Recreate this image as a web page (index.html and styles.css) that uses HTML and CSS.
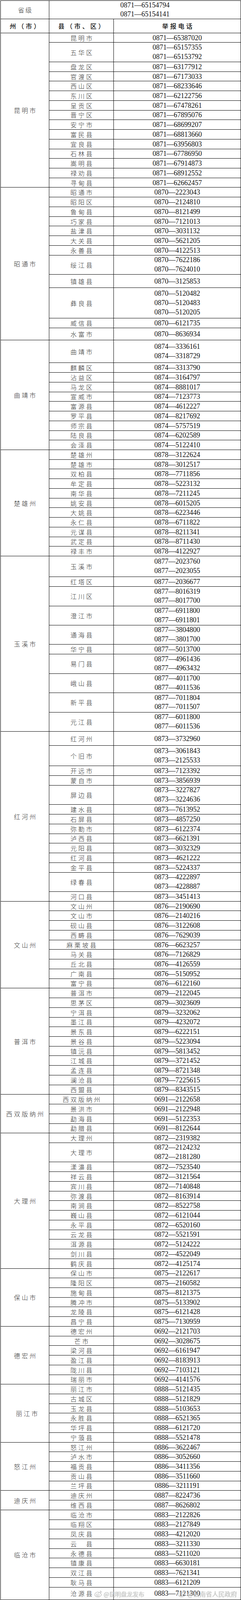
FILE: index.html
```html
<!DOCTYPE html>
<html lang="zh-CN">
<head>
<meta charset="utf-8">
<title>举报电话</title>
<link rel="stylesheet" href="styles.css">
</head>
<body>
<div class="page">
<div class="tbl">
<div class="row"><div class="g lv">省级</div><div class="p wide top"><div class="ln">0871—65154794</div><div class="ln">0871—65154141</div></div></div>
<div class="row head"><div class="g">州（市）</div><div class="n">县（市、区）</div><div class="p">举报电话</div></div>

<div class="row"><div class="g s15">昆明市</div><div class="n">昆明市</div><div class="p">0871—65387020</div></div>
<div class="row"><div class="n">五华区</div><div class="p"><div class="ln">0871—65157355</div><div class="ln">0871—65153792</div></div></div>
<div class="row"><div class="n">盘龙区</div><div class="p">0871—63177912</div></div>
<div class="row"><div class="n">官渡区</div><div class="p">0871—67173033</div></div>
<div class="row"><div class="n">西山区</div><div class="p">0871—68233646</div></div>
<div class="row"><div class="n">东川区</div><div class="p">0871—62122756</div></div>
<div class="row"><div class="n">呈贡区</div><div class="p">0871—67478261</div></div>
<div class="row"><div class="n">晋宁区</div><div class="p">0871—67895076</div></div>
<div class="row"><div class="n">安宁市</div><div class="p">0871—68699207</div></div>
<div class="row"><div class="n">富民县</div><div class="p">0871—68813660</div></div>
<div class="row"><div class="n">宜良县</div><div class="p">0871—63956803</div></div>
<div class="row"><div class="n">石林县</div><div class="p">0871—67786950</div></div>
<div class="row"><div class="n">嵩明县</div><div class="p">0871—67914873</div></div>
<div class="row"><div class="n">禄劝县</div><div class="p">0871—68912552</div></div>
<div class="row"><div class="n">寻甸县</div><div class="p">0871—62662457</div></div>

<div class="row"><div class="g s12">昭通市</div><div class="n">昭通市</div><div class="p">0870—2223043</div></div>
<div class="row"><div class="n">昭阳区</div><div class="p">0870—2124810</div></div>
<div class="row"><div class="n">鲁甸县</div><div class="p">0870—8121499</div></div>
<div class="row"><div class="n">巧家县</div><div class="p">0870—7121013</div></div>
<div class="row"><div class="n">盐津县</div><div class="p">0870—3031132</div></div>
<div class="row"><div class="n">大关县</div><div class="p">0870—5621205</div></div>
<div class="row"><div class="n">永善县</div><div class="p">0870—4122513</div></div>
<div class="row"><div class="n">绥江县</div><div class="p"><div class="ln">0870—7622186</div><div class="ln">0870—7624010</div></div></div>
<div class="row"><div class="n">镇雄县</div><div class="p">0870—3125853</div></div>
<div class="row"><div class="n">彝良县</div><div class="p"><div class="ln">0870—5120482</div><div class="ln">0870—5120483</div><div class="ln">0870—5120205</div></div></div>
<div class="row"><div class="n">威信县</div><div class="p">0870—6121735</div></div>
<div class="row"><div class="n">水富市</div><div class="p">0870—8636934</div></div>

<div class="row"><div class="g s10">曲靖市</div><div class="n">曲靖市</div><div class="p"><div class="ln">0874—3336161</div><div class="ln">0874—3318729</div></div></div>
<div class="row"><div class="n">麒麟区</div><div class="p">0874—3313790</div></div>
<div class="row"><div class="n">沾益区</div><div class="p">0874—3164797</div></div>
<div class="row"><div class="n">马龙区</div><div class="p">0874—8881017</div></div>
<div class="row"><div class="n">宣威市</div><div class="p">0874—7123773</div></div>
<div class="row"><div class="n">富源县</div><div class="p">0874—4612227</div></div>
<div class="row"><div class="n">罗平县</div><div class="p">0874—8217692</div></div>
<div class="row"><div class="n">师宗县</div><div class="p">0874—5757519</div></div>
<div class="row"><div class="n">陆良县</div><div class="p">0874—6202589</div></div>
<div class="row"><div class="n">会泽县</div><div class="p">0874—5122410</div></div>

<div class="row"><div class="g s11">楚雄州</div><div class="n">楚雄州</div><div class="p">0878—3122624</div></div>
<div class="row"><div class="n">楚雄市</div><div class="p">0878—3012517</div></div>
<div class="row"><div class="n">双柏县</div><div class="p">0878—7711856</div></div>
<div class="row"><div class="n">牟定县</div><div class="p">0878—5223132</div></div>
<div class="row"><div class="n">南华县</div><div class="p">0878—7211245</div></div>
<div class="row"><div class="n">姚安县</div><div class="p">0878—6015205</div></div>
<div class="row"><div class="n">大姚县</div><div class="p">0878—6223446</div></div>
<div class="row"><div class="n">永仁县</div><div class="p">0878—6711822</div></div>
<div class="row"><div class="n">元谋县</div><div class="p">0878—8211341</div></div>
<div class="row"><div class="n">武定县</div><div class="p">0878—8711430</div></div>
<div class="row"><div class="n">禄丰市</div><div class="p">0878—4122927</div></div>

<div class="row"><div class="g s10">玉溪市</div><div class="n">玉溪市</div><div class="p"><div class="ln">0877—2023760</div><div class="ln">0877—2023055</div></div></div>
<div class="row"><div class="n">红塔区</div><div class="p">0877—2036677</div></div>
<div class="row"><div class="n">江川区</div><div class="p"><div class="ln">0877—8016319</div><div class="ln">0877—8017700</div></div></div>
<div class="row"><div class="n">澄江市</div><div class="p"><div class="ln">0877—6911800</div><div class="ln">0877—6911801</div></div></div>
<div class="row"><div class="n">通海县</div><div class="p"><div class="ln">0877—3804800</div><div class="ln">0877—3801700</div></div></div>
<div class="row"><div class="n">华宁县</div><div class="p">0877—5013700</div></div>
<div class="row"><div class="n">易门县</div><div class="p"><div class="ln">0877—4961436</div><div class="ln">0877—4963432</div></div></div>
<div class="row"><div class="n">峨山县</div><div class="p"><div class="ln">0877—4011700</div><div class="ln">0877—4011536</div></div></div>
<div class="row"><div class="n">新平县</div><div class="p"><div class="ln">0877—7011804</div><div class="ln">0877—7011507</div></div></div>
<div class="row"><div class="n">元江县</div><div class="p"><div class="ln">0877—6011800</div><div class="ln">0877—6011536</div></div></div>

<div class="row"><div class="g s14">红河州</div><div class="n">红河州</div><div class="p">0873—3732960</div></div>
<div class="row"><div class="n">个旧市</div><div class="p"><div class="ln">0873—3061843</div><div class="ln">0873—2125533</div></div></div>
<div class="row"><div class="n">开远市</div><div class="p">0873—7123392</div></div>
<div class="row"><div class="n">蒙自市</div><div class="p">0873—3856939</div></div>
<div class="row"><div class="n">屏边县</div><div class="p"><div class="ln">0873—3227827</div><div class="ln">0873—3224636</div></div></div>
<div class="row"><div class="n">建水县</div><div class="p">0873—7613952</div></div>
<div class="row"><div class="n">石屏县</div><div class="p">0873—4857250</div></div>
<div class="row"><div class="n">弥勒市</div><div class="p">0873—6122374</div></div>
<div class="row"><div class="n">泸西县</div><div class="p">0873—6621391</div></div>
<div class="row"><div class="n">元阳县</div><div class="p">0873—3032329</div></div>
<div class="row"><div class="n">红河县</div><div class="p">0873—4621222</div></div>
<div class="row"><div class="n">金平县</div><div class="p">0873—5224337</div></div>
<div class="row"><div class="n">绿春县</div><div class="p"><div class="ln">0873—4222897</div><div class="ln">0873—4228887</div></div></div>
<div class="row"><div class="n">河口县</div><div class="p">0873—3451413</div></div>

<div class="row"><div class="g s9">文山州</div><div class="n">文山州</div><div class="p">0876—2190690</div></div>
<div class="row"><div class="n">文山市</div><div class="p">0876—2140216</div></div>
<div class="row"><div class="n">砚山县</div><div class="p">0876—3122608</div></div>
<div class="row"><div class="n">西畴县</div><div class="p">0876—7629039</div></div>
<div class="row"><div class="n">麻栗坡县</div><div class="p">0876—6623257</div></div>
<div class="row"><div class="n">马关县</div><div class="p">0876—7126829</div></div>
<div class="row"><div class="n">丘北县</div><div class="p">0876—4126559</div></div>
<div class="row"><div class="n">广南县</div><div class="p">0876—5150952</div></div>
<div class="row"><div class="n">富宁县</div><div class="p">0876—6122160</div></div>

<div class="row"><div class="g s11">普洱市</div><div class="n">普洱市</div><div class="p">0879—2122045</div></div>
<div class="row"><div class="n">思茅区</div><div class="p">0879—3023609</div></div>
<div class="row"><div class="n">宁洱县</div><div class="p">0879—3232062</div></div>
<div class="row"><div class="n">墨江县</div><div class="p">0879—4232072</div></div>
<div class="row"><div class="n">景东县</div><div class="p">0879—6222151</div></div>
<div class="row"><div class="n">景谷县</div><div class="p">0879—5223094</div></div>
<div class="row"><div class="n">镇沅县</div><div class="p">0879—5813452</div></div>
<div class="row"><div class="n">江城县</div><div class="p">0879—3721452</div></div>
<div class="row"><div class="n">孟连县</div><div class="p">0879—8721348</div></div>
<div class="row"><div class="n">澜沧县</div><div class="p">0879—7225615</div></div>
<div class="row"><div class="n">西盟县</div><div class="p">0879—8343515</div></div>

<div class="row"><div class="g s4">西双版纳州</div><div class="n">西双版纳州</div><div class="p">0691—2122658</div></div>
<div class="row"><div class="n">景洪市</div><div class="p">0691—2122948</div></div>
<div class="row"><div class="n">勐海县</div><div class="p">0691—5122353</div></div>
<div class="row"><div class="n">勐腊县</div><div class="p">0691—8122644</div></div>

<div class="row"><div class="g s13">大理州</div><div class="n">大理州</div><div class="p">0872—2319382</div></div>
<div class="row"><div class="n">大理市</div><div class="p"><div class="ln">0872—2124232</div><div class="ln">0872—2181280</div></div></div>
<div class="row"><div class="n">漾濞县</div><div class="p">0872—7523540</div></div>
<div class="row"><div class="n">祥云县</div><div class="p">0872—3121564</div></div>
<div class="row"><div class="n">宾川县</div><div class="p">0872—7140848</div></div>
<div class="row"><div class="n">弥渡县</div><div class="p">0872—8163914</div></div>
<div class="row"><div class="n">南涧县</div><div class="p">0872—8522758</div></div>
<div class="row"><div class="n">巍山县</div><div class="p">0872—6121044</div></div>
<div class="row"><div class="n">永平县</div><div class="p">0872—6520160</div></div>
<div class="row"><div class="n">云龙县</div><div class="p">0872—5521591</div></div>
<div class="row"><div class="n">洱源县</div><div class="p">0872—5124222</div></div>
<div class="row"><div class="n">剑川县</div><div class="p">0872—4522049</div></div>
<div class="row"><div class="n">鹤庆县</div><div class="p">0872—4125174</div></div>

<div class="row"><div class="g s6">保山市</div><div class="n">保山市</div><div class="p">0875—2122617</div></div>
<div class="row"><div class="n">隆阳区</div><div class="p">0875—2160582</div></div>
<div class="row"><div class="n">施甸县</div><div class="p">0875—8121375</div></div>
<div class="row"><div class="n">腾冲市</div><div class="p">0875—5133902</div></div>
<div class="row"><div class="n">龙陵县</div><div class="p">0875—6121428</div></div>
<div class="row"><div class="n">昌宁县</div><div class="p">0875—7130959</div></div>

<div class="row"><div class="g s6">德宏州</div><div class="n">德宏州</div><div class="p">0692—2121703</div></div>
<div class="row"><div class="n">芒市</div><div class="p">0692—3028675</div></div>
<div class="row"><div class="n">梁河县</div><div class="p">0692—6161947</div></div>
<div class="row"><div class="n">盈江县</div><div class="p">0692—8183913</div></div>
<div class="row"><div class="n">陇川县</div><div class="p">0692—7103121</div></div>
<div class="row"><div class="n">瑞丽市</div><div class="p">0692—4141576</div></div>

<div class="row"><div class="g s6 shift">丽江市</div><div class="n">丽江市</div><div class="p">0888—5121435</div></div>
<div class="row"><div class="n">古城区</div><div class="p">0888—5121829</div></div>
<div class="row"><div class="n">玉龙县</div><div class="p">0888—5103653</div></div>
<div class="row"><div class="n">永胜县</div><div class="p">0888—6521365</div></div>
<div class="row"><div class="n">华坪县</div><div class="p">0888—6121720</div></div>
<div class="row"><div class="n">宁蒗县</div><div class="p">0888—5521478</div></div>

<div class="row"><div class="g s5">怒江州</div><div class="n">怒江州</div><div class="p">0886—3622467</div></div>
<div class="row"><div class="n">泸水市</div><div class="p">0886—3052660</div></div>
<div class="row"><div class="n">福贡县</div><div class="p">0886—3411356</div></div>
<div class="row"><div class="n">贡山县</div><div class="p">0886—3511660</div></div>
<div class="row"><div class="n">兰坪县</div><div class="p">0886—3211191</div></div>

<div class="row"><div class="g s2">迪庆州</div><div class="n">迪庆州</div><div class="p">0887—8224736</div></div>
<div class="row"><div class="n">维西县</div><div class="p">0887—8626802</div></div>

<div class="row"><div class="g s9">临沧市</div><div class="n">临沧市</div><div class="p">0883—2122826</div></div>
<div class="row"><div class="n">临翔区</div><div class="p">0883—2127849</div></div>
<div class="row"><div class="n">凤庆县</div><div class="p">0883—4212020</div></div>
<div class="row"><div class="n">云　县</div><div class="p">0883—3211330</div></div>
<div class="row"><div class="n">永德县</div><div class="p">0883—5211020</div></div>
<div class="row"><div class="n">镇康县</div><div class="p">0883—6630181</div></div>
<div class="row"><div class="n">双江县</div><div class="p">0883—7621341</div></div>
<div class="row"><div class="n">耿马县</div><div class="p">0883—6121209</div></div>
<div class="row"><div class="n">沧源县</div><div class="p">0883—7121300</div></div>
</div>

<div class="wm wm1">
<svg class="wb" viewBox="0 0 24 20"><path d="M10 5C5 6 2 10 2 13c0 3.5 4 6 9 6 6 0 10-3 10-6.5 0-2-1.5-2.8-3-3.2.6-1.6.3-3-1.8-3-1.2 0-2.6.6-3.2 1 .3-1.6-.2-2.8-3-2.3z" fill="none" stroke="#bbb" stroke-width="1.4"/><ellipse cx="10.5" cy="13.5" rx="4.5" ry="3" fill="none" stroke="#bbb" stroke-width="1.2"/><circle cx="10" cy="14" r="1.2" fill="#bbb"/><path d="M17 2a5 5 0 0 1 5 5M17 4.5a2.5 2.5 0 0 1 2.5 2.5" fill="none" stroke="#bbb" stroke-width="1.3"/></svg>
<span>@昆明盘龙发布</span>
</div>
<div class="wm wm2">
<svg class="wb" viewBox="0 0 24 20"><path d="M10 5C5 6 2 10 2 13c0 3.5 4 6 9 6 6 0 10-3 10-6.5 0-2-1.5-2.8-3-3.2.6-1.6.3-3-1.8-3-1.2 0-2.6.6-3.2 1 .3-1.6-.2-2.8-3-2.3z" fill="none" stroke="#bbb" stroke-width="1.4"/><ellipse cx="10.5" cy="13.5" rx="4.5" ry="3" fill="none" stroke="#bbb" stroke-width="1.2"/><circle cx="10" cy="14" r="1.2" fill="#bbb"/><path d="M17 2a5 5 0 0 1 5 5M17 4.5a2.5 2.5 0 0 1 2.5 2.5" fill="none" stroke="#bbb" stroke-width="1.3"/></svg>
<span>@云南省人民政府</span>
</div>
</div>
</body>
</html>
```

FILE: styles.css
```css
/* All sizes are proportional to a 616 x 4306 frame:
   horizontal sizes in vw (1px = 0.16234vw), row pitches as fr of 100vh. */
html, body {
  margin: 0;
  padding: 0;
  background: #fff;
  overflow: hidden;
}

.page {
  position: relative;
  height: 100vh;
  box-sizing: border-box;
  padding: 1px 0 0 1px;
}

.tbl {
  display: grid;
  height: 100%;
  box-sizing: border-box;
  border-left: 1px solid #000;
  border-top: 1px solid #000;
  grid-template-columns: 124fr 165fr 325fr;
  grid-template-rows:
    49fr 38fr
    26fr 52fr repeat(13, 26fr)
    repeat(7, 26fr) 52fr 36fr 82fr 26fr 33fr
    61fr repeat(20, 26fr)
    56fr 26fr 52fr 52fr 52fr 26fr 52fr 52fr 52fr 52fr
    38fr 55fr 26fr 26fr 52fr repeat(7, 26fr) 52fr
    repeat(26, 26fr)
    52fr
    repeat(44, 26fr)
    34fr;
}

.row { display: contents; }

.row > div {
  box-sizing: border-box;
  min-height: 0;
  min-width: 0;
  border-right: 1px solid #000;
  border-bottom: 1px solid #000;
  display: flex;
  flex-direction: column;
  align-items: center;
  justify-content: center;
  white-space: nowrap;
  font-family: "Noto Sans CJK SC", sans-serif;
  font-weight: 300;
  font-size: 2.597vw;
  letter-spacing: 0.649vw;
  line-height: 20px;
  color: #333;
  padding-left: 0.649vw;
}

.row > .g { grid-column: 1; }
.row > .n { grid-column: 2; }
.row > .p { grid-column: 3; }
.row > .p.wide { grid-column: 2 / span 2; }

.s2 { grid-row: span 2; }
.s4 { grid-row: span 4; }
.s5 { grid-row: span 5; }
.s6 { grid-row: span 6; }
.s9 { grid-row: span 9; }
.s10 { grid-row: span 10; }
.s11 { grid-row: span 11; }
.s12 { grid-row: span 12; }
.s13 { grid-row: span 13; }
.s14 { grid-row: span 14; }
.s15 { grid-row: span 15; }

.row > .lv {
  letter-spacing: 0.487vw;
  padding-left: 0.487vw;
}

.row > .shift {
  padding-left: 2.273vw;
}

.row.head > div {
  font-weight: 500;
  color: #111;
  letter-spacing: 0.73vw;
  padding-left: 0.73vw;
}

.row > .p {
  font-family: "Liberation Serif", "Noto Sans CJK SC", serif;
  font-weight: 400;
  font-size: 2.922vw;
  letter-spacing: 0;
  padding-left: 0;
  color: #111;
}

.row.head > .p {
  font-family: "Noto Sans CJK SC", sans-serif;
  font-weight: 500;
  font-size: 2.597vw;
  letter-spacing: 0.73vw;
  padding-left: 0.73vw;
}

/* 25px of a 4306px frame */
.ln {
  height: 0.5806vh;
  line-height: 0.5806vh;
}

.top .ln {
  height: 0.5574vh;
  line-height: 0.5574vh;
}

.wm {
  position: absolute;
  display: flex;
  align-items: center;
  gap: 0.487vw;
  font-family: "Noto Sans CJK SC", sans-serif;
  color: rgba(215, 215, 215, 0.92);
  text-shadow: 0 0 1px rgba(110, 110, 110, 0.7);
  white-space: nowrap;
  line-height: 1;
}

.wb {
  display: block;
  width: 3.571vw;
  height: 2.922vw;
}

.wm1 {
  left: 38.96%;
  bottom: 0.16vh;
  font-size: 2.435vw;
}

.wm2 {
  left: 73.7%;
  bottom: 0.18vh;
  font-size: 2.597vw;
}
```
